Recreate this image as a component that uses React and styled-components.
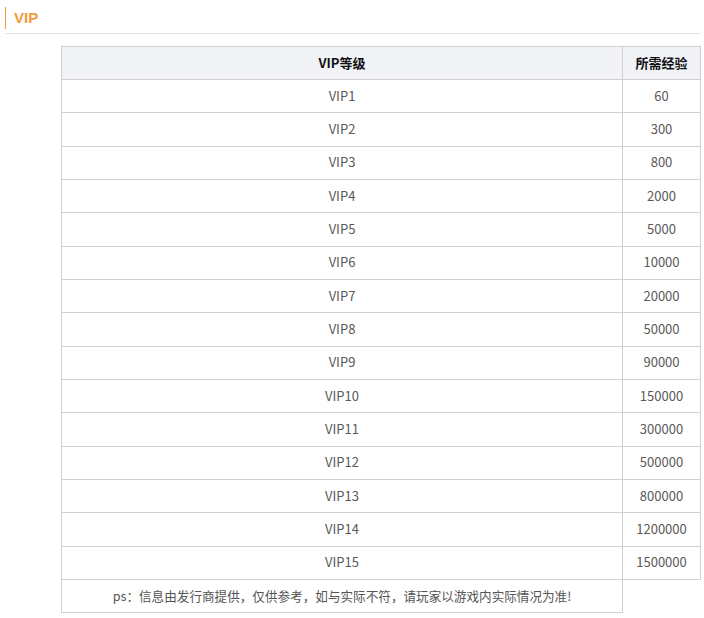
import React from 'react';
import styled, { createGlobalStyle } from 'styled-components';

const GlobalStyle = createGlobalStyle`
    body {
        margin: 0;
        background: #fff;
        font-family: "Noto Sans CJK SC", "Noto Sans", sans-serif;
    }
`;

const Page = styled.div`
    padding: 7px 4px 0 5px;
`;

const Heading = styled.div`
    display: flex;
    align-items: center;
    height: 22px;
    padding: 0 0 2px 8px;
    box-sizing: border-box;
    border-left: 1px solid #f39a3c;
    color: #f39a3c;
    font-size: 15px;
    font-weight: 700;
    font-family: "Liberation Sans", "Noto Sans CJK SC", sans-serif;
`;

const Rule = styled.div`
    margin-top: 4px;
    height: 1px;
    background: #e3e3e3;
`;

const Table = styled.table`
    margin: 12px 0 0 56px;
    width: 640px;
    border-collapse: collapse;
    font-size: 13px;
    color: #595959;
`;

const Th = styled.th`
    height: 31px;
    padding: 0 0 1px;
    border: 1px solid #d0d0d0;
    background: #f2f3f7;
    color: #111;
    font-weight: 700;
    text-align: center;
    width: ${p => p.w || 'auto'};
`;

const Td = styled.td`
    height: 30.35px;
    padding: 0 0 2px;
    border: 1px solid #d0d0d0;
    text-align: center;
`;

const Note = styled.td`
    height: 30px;
    padding: 0 0 2px;
    border: 1px solid #d0d0d0;
    text-align: center;
    font-size: 12.6px;
    color: #555;
`;

const levels = [
    ['VIP1', 60], ['VIP2', 300], ['VIP3', 800], ['VIP4', 2000], ['VIP5', 5000],
    ['VIP6', 10000], ['VIP7', 20000], ['VIP8', 50000], ['VIP9', 90000],
    ['VIP10', 150000], ['VIP11', 300000], ['VIP12', 500000], ['VIP13', 800000],
    ['VIP14', 1200000], ['VIP15', 1500000],
];

const App = () => (
    <Page>
        <GlobalStyle />
        <Heading>VIP</Heading>
        <Rule />
        <Table>
            <thead>
                <tr>
                    <Th>VIP等级</Th>
                    <Th w="77px">所需经验</Th>
                </tr>
            </thead>
            <tbody>
                {levels.map(([name, exp]) => (
                    <tr key={name}>
                        <Td>{name}</Td>
                        <Td>{exp}</Td>
                    </tr>
                ))}
                <tr>
                    <Note>ps：信息由发行商提供，仅供参考，如与实际不符，请玩家以游戏内实际情况为准!</Note>
                </tr>
            </tbody>
        </Table>
    </Page>
);

export default App;
